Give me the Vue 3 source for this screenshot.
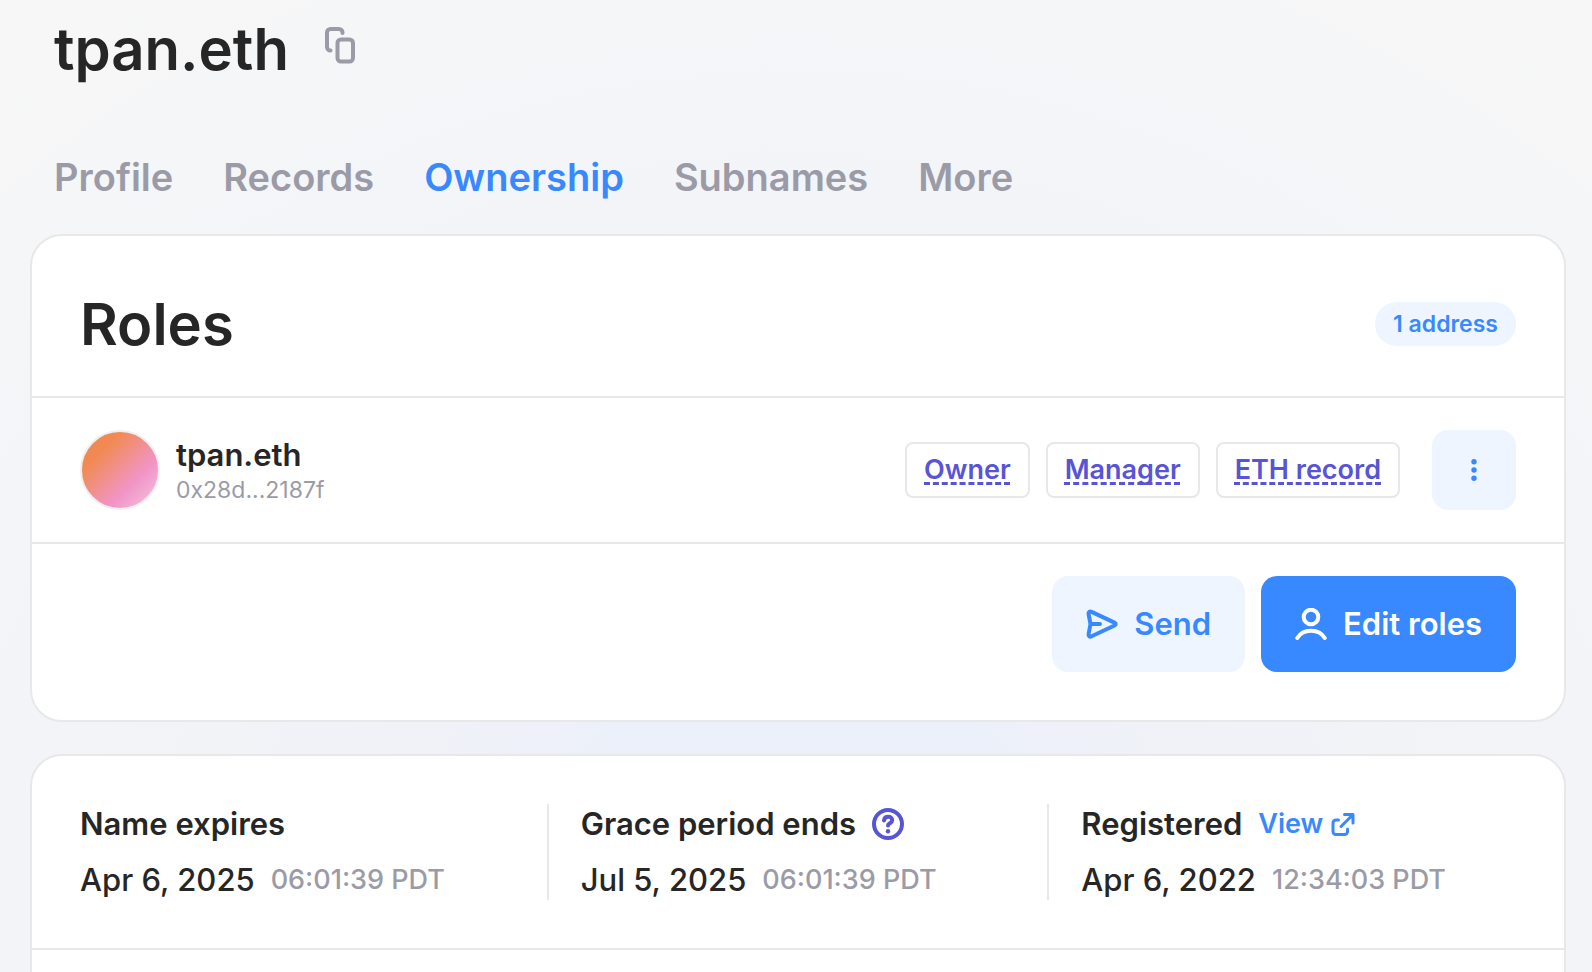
<script setup>
const tabs = [
  { label: 'Profile' },
  { label: 'Records' },
  { label: 'Ownership', active: true },
  { label: 'Subnames' },
  { label: 'More' },
]

const address = { name: 'tpan.eth', short: '0x28d...2187f', roles: ['Owner', 'Manager', 'ETH record'] }

const dates = [
  { title: 'Name expires', date: 'Apr 6, 2025', time: '06:01:39 PDT' },
  { title: 'Grace period ends', date: 'Jul 5, 2025', time: '06:01:39 PDT', help: true },
  { title: 'Registered', date: 'Apr 6, 2022', time: '12:34:03 PDT', link: true },
]
</script>

<template>
  <main class="page">
    <header class="title">
      <h1>tpan.eth</h1>
      <button class="copy" type="button" aria-label="Copy name">
        <svg width="32" height="38" viewBox="0 0 32 38" fill="none" stroke="currentColor" stroke-width="4" stroke-linecap="round" stroke-linejoin="round">
          <path d="M17.500 6V5.500a3.500 3.500 0 0 0-3.500-3.500H5.500A3.500 3.500 0 0 0 2 5.500V20a3.500 3.500 0 0 0 3.500 3.500" />
          <rect x="12.500" y="12.500" width="15.500" height="22" rx="3.500" />
        </svg>
      </button>
    </header>

    <nav class="tabs" aria-label="Name sections">
      <button v-for="tab in tabs" :key="tab.label" type="button" class="tab" :class="{ active: tab.active }">{{ tab.label }}</button>
    </nav>

    <section class="card">
      <div class="card-head">
        <h2>Roles</h2>
        <span class="pill">1 address</span>
      </div>

      <div class="role-row">
        <span class="avatar"></span>
        <div class="who">
          <strong>{{ address.name }}</strong>
          <span>{{ address.short }}</span>
        </div>
        <div class="tags">
          <button v-for="role in address.roles" :key="role" type="button" class="tag"><span>{{ role }}</span></button>
        </div>
        <button class="menu" type="button" aria-label="More actions">
          <svg width="6" height="24" viewBox="0 0 6 24" fill="currentColor">
            <circle cx="3" cy="3.700" r="2.700" />
            <circle cx="3" cy="12" r="2.700" />
            <circle cx="3" cy="20.300" r="2.700" />
          </svg>
        </button>
      </div>

      <div class="actions">
        <button class="action light" type="button">
          <svg width="32" height="32" viewBox="0 0 32 32" fill="none" stroke="currentColor" stroke-width="4" stroke-linecap="round" stroke-linejoin="round">
            <path d="M2.600 6.200C2.200 4 3.700 3 5.600 3.900L28.500 14.600c1.700.9 1.700 2 0 2.900L5.600 28.300c-1.900.9-3.400-.1-3-2.300L4.500 16zM4.500 16H14" />
          </svg>
          Send
        </button>
        <button class="action solid" type="button">
          <svg width="32" height="32" viewBox="0 0 32 32" fill="none" stroke="currentColor" stroke-width="4" stroke-linecap="round">
            <circle cx="16" cy="9" r="7.300" />
            <path d="M2.300 30C5 25.500 10 22.800 16 22.800s11 2.700 13.700 7.200" />
          </svg>
          Edit roles
        </button>
      </div>
    </section>

    <section class="card">
      <div class="dates">
        <div v-for="item in dates" :key="item.title" class="date">
          <div class="date-title">
            <h3>{{ item.title }}</h3>
            <button v-if="item.help" class="help" type="button" aria-label="About the grace period">
              <svg width="32" height="32" viewBox="0 0 32 32" fill="none" stroke="currentColor" stroke-width="4" stroke-linecap="round" stroke-linejoin="round">
                <circle cx="16" cy="16" r="14" />
                <path d="M12 12.500C12.300 10 14 8.800 16.200 8.800c2.400 0 4 1.400 4 3.400 0 3-4.200 3-4.200 5.300" />
                <circle cx="16" cy="23.200" r="2.200" fill="currentColor" stroke="none" />
              </svg>
            </button>
            <a v-if="item.link" class="view" href="#view">
              View
              <svg width="24" height="24" viewBox="0 0 24 24" fill="none" stroke="currentColor" stroke-width="3" stroke-linecap="round" stroke-linejoin="round">
                <path d="M13.500 2.500h8.500v8.500M21.500 3L10 14.500M7.500 8H5a3 3 0 0 0-3 3v8.500a3 3 0 0 0 3 3h8.500a3 3 0 0 0 3-3V17" />
              </svg>
            </a>
          </div>
          <div class="date-value">
            <span class="day">{{ item.date }}</span>
            <span class="time">{{ item.time }}</span>
          </div>
        </div>
      </div>
      <div class="more"></div>
    </section>
  </main>
</template>

<style>
body {
  overflow: hidden;
}
</style>

<style scoped>
.page {
  height: 100vh;
  overflow: hidden;
  box-sizing: border-box;
  padding: 16px 26px 0 30px;
  font-family: "Inter", "Liberation Sans", sans-serif;
  font-weight: 600;
  color: #262626;
  background: radial-gradient(ellipse 1200px 1040px at 50% 90%, #e9effb 0%, #ecf0fa 20%, #f1f2f7 36%, #f3f5f8 75%, #f7f7f7 100%);
}
h1, h2, h3 {
  margin: 0;
  font-weight: 600;
}
button {
  font: inherit;
  border: 0;
  padding: 0;
  margin: 0;
  background: none;
  cursor: pointer;
}
svg {
  display: block;
  flex: none;
}
.title {
  display: flex;
  align-items: center;
  gap: 36px;
  padding-left: 24px;
}
h1 {
  font-size: 58px;
  line-height: 66px;
}
.copy {
  color: #9b9ba7;
  padding-bottom: 6px;
}
.tabs {
  display: flex;
  gap: 50px;
  padding: 70px 24px 32px;
}
.tab {
  font-size: 38px;
  line-height: 50px;
  color: #9b9ba7;
}
.tab.active {
  color: #3889ff;
}
.card {
  background: #fff;
  border: 2px solid #e8e8e8;
  border-radius: 32px;
  margin-bottom: 32px;
}
.card-head {
  display: flex;
  align-items: center;
  justify-content: space-between;
  padding: 48px 48px 32px;
}
h2 {
  font-size: 58px;
  line-height: 80px;
}
.pill {
  padding: 0 18px;
  border-radius: 22px;
  font-size: 23px;
  line-height: 44px;
  color: #3889ff;
  background: #eef5ff;
}
.role-row {
  display: flex;
  align-items: center;
  padding: 32px 48px;
  border: solid #e8e8e8;
  border-width: 2px 0;
}
.avatar {
  box-sizing: border-box;
  width: 80px;
  height: 80px;
  border: 2px solid #f0eef0;
  border-radius: 50%;
  background: linear-gradient(135deg, #f18a52 25%, #f195c8 68%, #f4c0dc 95%);
}
.who {
  flex: 1;
  display: flex;
  flex-direction: column;
  padding-left: 16px;
}
.who strong {
  font-size: 31px;
  line-height: 40px;
  font-weight: 600;
}
.who span {
  font-size: 23px;
  line-height: 30px;
  font-weight: 400;
  color: #9b9ba7;
}
.tags {
  display: flex;
  gap: 16px;
  margin-right: 32px;
}
.tag {
  padding: 0 17px;
  border: 2px solid #e8e8e8;
  border-radius: 8px;
  font-size: 27px;
  line-height: 52px;
  color: #5854d6;
}
.tag span {
  text-decoration: underline dashed 3px;
  text-underline-offset: 3px;
  text-decoration-skip-ink: none;
}
.menu {
  display: grid;
  place-items: center;
  width: 84px;
  height: 80px;
  border-radius: 16px;
  color: #3889ff;
  background: #eef5ff;
}
.actions {
  display: flex;
  justify-content: flex-end;
  gap: 16px;
  padding: 32px 48px 48px;
}
.action {
  display: flex;
  align-items: center;
  gap: 16px;
  padding: 0 34px;
  border-radius: 16px;
  font-size: 31px;
  line-height: 96px;
}
.light {
  color: #3889ff;
  background: #eef5ff;
}
.solid {
  color: #fff;
  background: #3889ff;
}
.dates {
  display: flex;
  gap: 32px;
  padding: 48px;
  border-bottom: 2px solid #e8e8e8;
}
.date {
  flex: 1 1 0;
  display: flex;
  flex-direction: column;
  justify-content: space-between;
  height: 96px;
}
.date + .date {
  border-left: 2px solid #e8e8e8;
  padding-left: 32px;
}
.date-title, .date-value {
  display: flex;
  align-items: center;
  gap: 16px;
  line-height: 40px;
}
h3 {
  font-size: 31px;
}
.help {
  color: #5854d6;
}
.view {
  display: flex;
  align-items: center;
  gap: 8px;
  font-size: 27px;
  color: #3889ff;
  text-decoration: none;
}
.day {
  font-size: 31px;
  font-weight: 500;
}
.time {
  font-size: 27px;
  font-weight: 500;
  color: #9b9ba7;
}
.more {
  height: 120px;
}
</style>
